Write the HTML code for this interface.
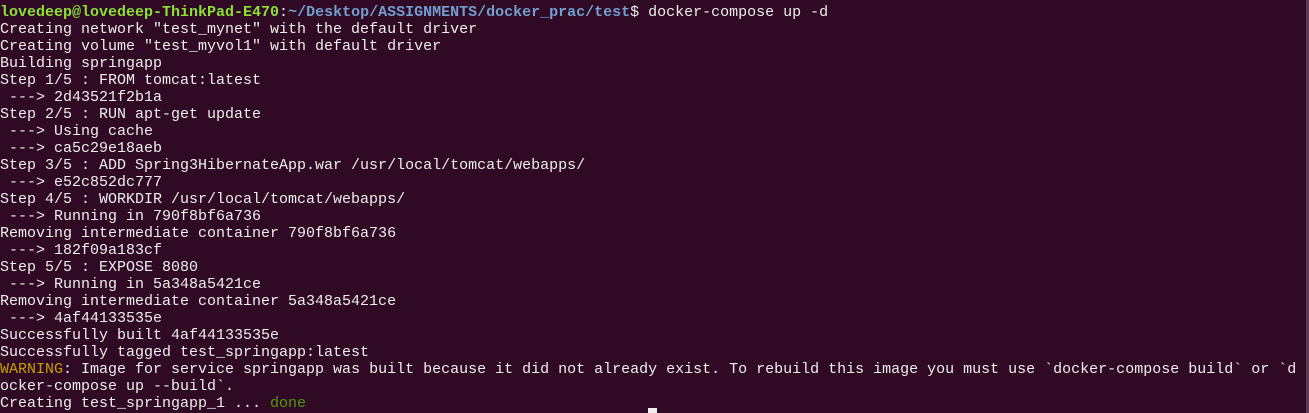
<!DOCTYPE html>
<html><head><meta charset="utf-8"><style>
html,body{margin:0;padding:0;background:#300a24;width:1309px;height:413px;overflow:hidden}
pre{margin:0;position:absolute;left:0;top:4px;font-family:"Liberation Mono",monospace;font-size:15px;line-height:17px;color:#eeeeec;white-space:pre}
.g{color:#8ae234;font-weight:bold}.b{color:#729fcf;font-weight:bold}
.y{color:#c4a000}.d{color:#4e9a06}
.cur{position:absolute;left:648px;top:408px;width:9px;height:5px;background:#eeeeec}
.sb{position:absolute;right:0;top:0;width:3px;height:413px;background:#5a3a50}
</style></head><body>
<pre><span class="g">lovedeep@lovedeep-ThinkPad-E470</span>:<span class="b">~/Desktop/ASSIGNMENTS/docker_prac/test</span>$ docker-compose up -d
Creating network "test_mynet" with the default driver
Creating volume "test_myvol1" with default driver
Building springapp
Step 1/5 : FROM tomcat:latest
 ---&gt; 2d43521f2b1a
Step 2/5 : RUN apt-get update
 ---&gt; Using cache
 ---&gt; ca5c29e18aeb
Step 3/5 : ADD Spring3HibernateApp.war /usr/local/tomcat/webapps/
 ---&gt; e52c852dc777
Step 4/5 : WORKDIR /usr/local/tomcat/webapps/
 ---&gt; Running in 790f8bf6a736
Removing intermediate container 790f8bf6a736
 ---&gt; 182f09a183cf
Step 5/5 : EXPOSE 8080
 ---&gt; Running in 5a348a5421ce
Removing intermediate container 5a348a5421ce
 ---&gt; 4af44133535e
Successfully built 4af44133535e
Successfully tagged test_springapp:latest
<span class="y">WARNING</span>: Image for service springapp was built because it did not already exist. To rebuild this image you must use `docker-compose build` or `d
ocker-compose up --build`.
Creating test_springapp_1 ... <span class="d">done</span></pre>
<div class="cur"></div><div class="sb"></div>
</body></html>
